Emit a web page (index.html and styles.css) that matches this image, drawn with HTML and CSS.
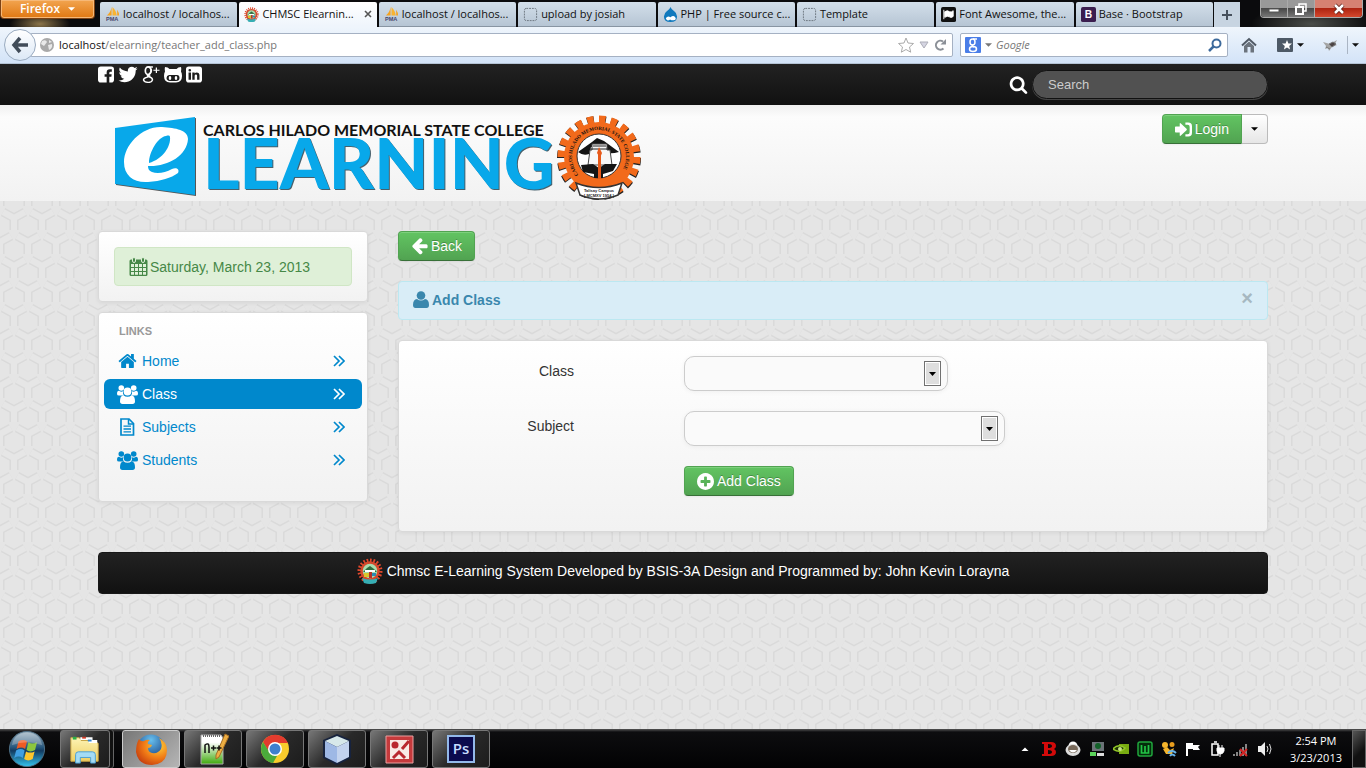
FILE: index.html
```html
<!DOCTYPE html>
<html lang="en">
<head>
<meta charset="utf-8">
<title>CHMSC Elearning System</title>
<link rel="stylesheet" href="styles.css">
</head>
<body>
<svg class="sprite" aria-hidden="true">
  <defs>
    <linearGradient id="orb" x1="0" y1="0" x2="0" y2="1"><stop offset="0" stop-color="#9fb4c2"/><stop offset=".45" stop-color="#27577d"/><stop offset=".55" stop-color="#123a60"/><stop offset="1" stop-color="#35c4ee"/></linearGradient>
    <linearGradient id="folder" x1="0" y1="0" x2="0" y2="1"><stop offset="0" stop-color="#fdf3b4"/><stop offset="1" stop-color="#efcf62"/></linearGradient>
    <linearGradient id="npp" x1="0" y1="0" x2="0" y2="1"><stop offset=".25" stop-color="#fff"/><stop offset="1" stop-color="#3faa0c"/></linearGradient>
    <radialGradient id="fox" cx=".7" cy=".3" r=".9"><stop offset="0" stop-color="#ffd23a"/><stop offset=".5" stop-color="#f07a16"/><stop offset="1" stop-color="#b92c0c"/></radialGradient>
    <radialGradient id="world" cx=".5" cy=".2" r=".8"><stop offset="0" stop-color="#68c0ee"/><stop offset="1" stop-color="#0b2f77"/></radialGradient>
  </defs>
  <symbol id="i-search" viewBox="0 0 1792 1792"><path d="M1216 832q0-185-131.500-316.500t-316.500-131.500-316.500 131.500-131.500 316.500 131.500 316.500 316.500 131.500 316.500-131.500 131.500-316.500zm512 832q0 52-38 90t-90 38q-54 0-90-38l-343-342q-179 124-399 124-143 0-273.500-55.500t-225-150-150-225-55.500-273.500 55.500-273.500 150-225 225-150 273.500-55.500 273.500 55.500 225 150 150 225 55.500 273.500q0 220-124 399l343 343q37 37 37 90z"/></symbol>
  <symbol id="i-plus" viewBox="128 128 1536 1536"><path d="M1344 960v-128q0-26-19-45t-45-19h-256v-256q0-26-19-45t-45-19h-128q-26 0-45 19t-19 45v256h-256q-26 0-45 19t-19 45v128q0 26 19 45t45 19h256v256q0 26 19 45t45 19h128q26 0 45-19t19-45v-256h256q26 0 45-19t19-45zm320-64q0 209-103 385.500t-279.500 279.500-385.500 103-385.500-103-279.500-279.500-103-385.500 103-385.500 279.500-279.500 385.500-103 385.500 103 279.500 279.500 103 385.500z"/></symbol>
  <symbol id="i-left" viewBox="64 160 1640 1640"><path d="M1664 896v128q0 53-32.500 90.500t-84.500 37.500h-704l293 294q38 36 38 90t-38 90l-75 76q-37 37-90 37-52 0-91-37l-651-652q-37-37-37-90 0-52 37-91l651-650q38-38 91-38 52 0 90 38l75 74q38 38 38 91t-38 91l-293 293h704q52 0 84.500 37.500t32.500 90.500z"/></symbol>
  <symbol id="i-home" viewBox="80 80 1632 1632"><path d="M1472 992v480q0 26-19 45t-45 19h-384v-384h-256v384h-384q-26 0-45-19t-19-45v-480q0-1 .5-3t.5-3l575-474 575 474q1 2 1 6zm223-69l-62 74q-8 9-21 11h-3q-13 0-21-7l-692-577-692 577q-12 8-24 7-13-2-21-11l-62-74q-8-10-7-23.500t11-21.500l719-599q32-26 76-26t76 26l244 204v-195q0-14 9-23t23-9h192q14 0 23 9t9 23v408l219 182q10 8 11 21.500t-7 23.500z"/></symbol>
  <symbol id="i-twitter" viewBox="80 200 1620 1400"><path d="M1684 408q-67 98-162 167 1 14 1 42 0 130-38 259.500t-115.500 248.500-184.500 210.500-258 146-323 54.500q-271 0-496-145 35 4 78 4 225 0 401-138-105-2-188-64.500t-114-159.500q33 5 61 5 43 0 85-11-112-23-185.500-111.500t-73.500-205.500v-4q68 38 146 41-66-44-105-115t-39-154q0-88 44-163 121 149 294.500 238.500t371.500 99.500q-8-38-8-74 0-134 94.500-228.500t228.500-94.500q140 0 236 102 109-21 205-78-37 115-142 178 93-10 186-50z"/></symbol>
  <symbol id="i-facebook" viewBox="0 0 17 17"><path fill-rule="evenodd" d="M3 0h11q3 0 3 3v11q0 3-3 3h-2v-6h2.200l.3-2.700H12V6.800q0-1.300 1.300-1.300h1.400V3h-2.200Q9.200 3 9.200 6.400v1.900H7V11h2.200v6H3q-3 0-3-3V3q0-3 3-3z"/></symbol>
  <symbol id="i-gplus" viewBox="0 0 18 18"><g fill="none" stroke="currentColor"><ellipse cx="6" cy="5" rx="3" ry="4" stroke-width="1.800"/><path stroke-width="1.500" d="M6 1h5M8 2q3 3 0 5.500T8.500 11M6 9q-2 1.500 1 2.500 4 1 3.500 3.500T6 17.300 1.200 15 6 11.500"/><path stroke-width="1.300" d="M11.500 4.500H18M14.700 1.500v6"/></g></symbol>
  <symbol id="i-github" viewBox="0 0 18 17"><path fill-rule="evenodd" d="M1 1q3 0 4.500 2h7Q14 1 17 1q.6 2 0 4.500Q18 7 18 10q0 6-6 6.500H6Q0 16 0 10q0-3 1-4.500Q.4 3 1 1zM5 9q-2.500.3-2.500 3T6 15h6q3.500 0 3.500-3T13 9H5z"/><ellipse cx="6" cy="12" rx="1.300" ry="2"/><ellipse cx="12" cy="12" rx="1.300" ry="2"/></symbol>
  <symbol id="i-linkedin" viewBox="0 0 17 17"><path fill-rule="evenodd" d="M3 0h11q3 0 3 3v11q0 3-3 3H3q-3 0-3-3V3q0-3 3-3zM2.700 6.500v7.600h2.600V6.500zM4 2.600a1.400 1.400 0 1 0 .01 2.800A1.400 1.400 0 1 0 4 2.600zM6.700 6.500v7.600h2.500V9.800q0-1.400 1.300-1.400t1.300 1.500v4.200h2.500V9.600q0-3.300-2.900-3.300-1.500 0-2.200 1.200V6.500z"/></symbol>
  <symbol id="i-login" viewBox="0 0 18 17"><path d="M0 6q0-.8.800-.8H5V2.500q0-1.300 1.200-.4l6 5.600q.8.800 0 1.600l-6 5.600q-1.200.9-1.200-.4v-2.700H.8q-.8 0-.8-.8z"/><path d="M11 1h3q4 0 4 4v7q0 4-4 4h-3v-2.500h2.500q2 0 2-2V5.500q0-2-2-2H11z"/></symbol>
  <symbol id="i-calendar" viewBox="0 0 19 19"><path fill-rule="evenodd" d="M2 2.500h15q1.500 0 1.500 1.500v13.500Q18.500 19 17 19H2q-1.500 0-1.500-1.500V4Q.5 2.500 2 2.500zM2 7v3h3V7zm4 0v3h3V7zm4 0v3h3V7zm4 0v3h3V7zM2 11v3h3v-3zm4 0v3h3v-3zm4 0v3h3v-3zm4 0v3h3v-3zM2 15v2.700h3V15zm4 0v2.700h3V15zm4 0v2.700h3V15zm4 0v2.700h3V15z"/><rect x="3.500" y=".5" width="3" height="5" rx="1.500" stroke="#dff0d8"/><rect x="12.500" y=".5" width="3" height="5" rx="1.500" stroke="#dff0d8"/></symbol>
  <symbol id="i-users" viewBox="0 0 21 19"><circle cx="4.300" cy="3" r="2.800"/><circle cx="16.700" cy="3" r="2.800"/><path d="M0 9q0-3.200 2-3.200 2.300 1.400 4 .5-.6 3 1.200 4.200H2Q0 10.500 0 9zM21 9q0-3.200-2-3.200-2.300 1.400-4 .5.600 3-1.200 4.200H19q2 0 2-1.500z"/><circle cx="10.500" cy="6.500" r="3.900"/><path d="M6.300 10.300q4.200 3 8.400 0 3.300.7 3.300 6 0 2.700-2.500 2.700h-10Q3 19 3 16.300q0-5.300 3.300-6z"/></symbol>
  <symbol id="i-file" viewBox="0 0 16 18"><path d="M1.500 1h8L14 5.500V17H1.500z" fill="none" stroke="currentColor" stroke-width="1.700"/><path d="M9 1v5h5" fill="none" stroke="currentColor" stroke-width="1.500"/><path d="M4 8.200h7.500M4 11h7.500M4 13.800h7.500" stroke="currentColor" stroke-width="1.300"/></symbol>
  <symbol id="i-chev" viewBox="0 0 12 12"><path d="M1 1l5 5-5 5M6 1l5 5-5 5" fill="none" stroke="currentColor" stroke-width="1.700"/></symbol>
  <symbol id="i-user" viewBox="0 0 16 17"><circle cx="8" cy="4.500" r="4.300"/><path d="M4 8q4 3 8 0 4 .5 4 6 0 3-2.500 3h-11Q0 17 0 14 0 8.500 4 8z"/></symbol>
  <symbol id="i-caret" viewBox="0 0 8 4"><path d="M0 0h8L4 4z"/></symbol>
  <symbol id="i-pma" viewBox="0 0 16 16"><path d="M7 0v9H2Q6 6 7 0z" fill="#f6a21e"/><path d="M8 0q4 4 4.500 9H8z" fill="#f8b331"/><path d="M13 3q2 3 2 6h-2z" fill="#f6a21e"/><text x="1" y="15" font-size="6" font-weight="700" fill="#45456d" font-family="Liberation Sans, sans-serif">PMA</text></symbol>
  <symbol id="i-emblem" viewBox="0 0 26 26"><circle cx="13" cy="13" r="10.500" fill="none" stroke="#e0472c" stroke-width="4" pathLength="40" stroke-dasharray="1 1"/><circle cx="13" cy="13" r="8.500" fill="#a7dcae" stroke="#d4492c" stroke-width="2.500"/><path d="M6 14l4-4 3-2 4 3 3 3z" fill="#2d6c3e"/><path d="M8 12h10v2H8z" fill="#fff"/><path d="M7 15h5v4H7z" fill="#d9c62b"/><path d="M12 14h3v6h-3z" fill="#b5342a"/><path d="M15 15h4v3h-4z" fill="#2c8bb5"/><path d="M5 20q8 3 16 0l-2 5q-6 2-12 0z" fill="#36aeb4"/></symbol>
  <symbol id="i-dash" viewBox="0 0 16 16"><rect x="1.500" y="1.500" width="13" height="13" rx="2" fill="none" stroke="#6b747e" stroke-dasharray="2 1"/></symbol>
</svg>

<header class="browser">
  <div class="titlebar">
    <button class="firefox" type="button">Firefox <svg class="caret"><use href="#i-caret"/></svg></button>
    <div class="tabs">
      <a class="tab" href="#"><svg><use href="#i-pma"/></svg><span>localhost / localhos...</span></a>
      <a class="tab current" href="#"><svg><use href="#i-emblem"/></svg><span>CHMSC Elearnin...</span><svg class="close" viewBox="0 0 8 8"><path d="M1 1l6 6M7 1L1 7" stroke="#555" stroke-width="1.600"/></svg></a>
      <a class="tab" href="#"><svg><use href="#i-pma"/></svg><span>localhost / localhos...</span></a>
      <a class="tab" href="#"><svg><use href="#i-dash"/></svg><span>upload by josiah</span></a>
      <a class="tab" href="#"><svg viewBox="0 0 16 16"><path d="M8 0q1 3 4 4.500 3 2 3 5.500 0 6-7 6t-7-6q0-3.500 3-5.500Q7 3 8 0z" fill="#1079bd"/><path d="M3 12q2-3 5-1 3-3 5 0t-2 3-3-1q-4 3-5-1z" fill="#fff"/></svg><span>PHP | Free source c...</span></a>
      <a class="tab" href="#"><svg><use href="#i-dash"/></svg><span>Template</span></a>
      <a class="tab" href="#"><svg viewBox="0 0 16 16"><rect width="16" height="16" rx="2"/><path d="M3 3v10M4 5q3-2 5 0 2 1 4-1v6q-2 2-4 .5Q7 9 4 11z" fill="#fff" stroke="#fff"/></svg><span>Font Awesome, the...</span></a>
      <a class="tab" href="#"><svg viewBox="0 0 16 16"><rect width="16" height="16" rx="2" fill="#3b1e4f"/><text x="4" y="12" font-size="11" font-weight="700" fill="#fff" font-family="Liberation Sans, sans-serif">B</text></svg><span>Base · Bootstrap</span></a>
    </div>
    <button class="newtab" type="button" aria-label="New tab"><svg viewBox="0 0 10 10"><path d="M5 0v10M0 5h10" stroke="#46505c" stroke-width="2"/></svg></button>
    <div class="winbtns">
      <button type="button" aria-label="Minimize"><svg viewBox="0 0 14 14"><path d="M2 7h10v3H2z" fill="#fff" stroke="#555"/></svg></button>
      <button type="button" aria-label="Restore"><svg viewBox="0 0 14 14"><path d="M5 2h7v7H5z" fill="none" stroke="#fff" stroke-width="1.500"/><path d="M2 5h7v7H2z" fill="#666" stroke="#fff" stroke-width="2"/></svg></button>
      <button class="quit" type="button" aria-label="Close"><svg viewBox="0 0 14 14"><path d="M3 3l8 8M11 3l-8 8" stroke="#5b1a12" stroke-width="4"/><path d="M3 3l8 8M11 3l-8 8" stroke="#fff" stroke-width="2.500"/></svg></button>
    </div>
  </div>
  <div class="toolbar">
    <button class="goback" type="button" aria-label="Back"><svg viewBox="0 0 18 18"><path d="M9 2L3 9l6 7M3 9h14" fill="none" stroke="#414c59" stroke-width="3.500"/></svg></button>
    <div class="address">
      <svg class="s14" viewBox="0 0 14 14"><circle cx="7" cy="7" r="7" fill="#a9a9a9"/><path d="M2 3q4-2 5 1L4 8 1 6zM8 7l4-1q1 4-3 6zM9 2l3 2-3 1z" fill="#e9e9e9"/></svg>
      <span class="url"><b>localhost</b>/elearning/teacher_add_class.php</span>
      <svg class="s16" viewBox="0 0 16 16"><path d="M8 1l2 5 5.500.5-4 3.500 1.200 5.200L8 12.500l-4.700 2.700L4.500 10l-4-3.500L6 6z" fill="#fff" stroke="#aaa"/></svg>
      <svg class="s10" viewBox="0 0 10 8"><path d="M1 1h8L5 7z" fill="#d5d5e2" stroke="#adaeb8"/></svg>
      <svg class="s12" viewBox="0 0 12 12"><path d="M9.500 9.500A4.500 4.500 0 1 1 9 2.500" fill="none" stroke="#8b9097" stroke-width="2"/><path d="M12 0v5.500H6.500z" fill="#8b9097"/></svg>
    </div>
    <div class="engine">
      <svg class="s16" viewBox="0 0 16 16"><rect width="16" height="16" rx="1" fill="#4a7ee8"/><g fill="none" stroke="#fff" stroke-width="1.500"><ellipse cx="7.500" cy="5" rx="2.500" ry="3"/><ellipse cx="8" cy="12" rx="3.500" ry="2.500"/><path d="M8 2h4M8 8q-2 1 1 2"/></g></svg>
      <svg class="caret dim"><use href="#i-caret"/></svg>
      <input type="text" placeholder="Google" aria-label="Google search">
      <svg class="s14" viewBox="0 0 14 14"><circle cx="8.500" cy="5.500" r="4" fill="none" stroke="#3d6a9c" stroke-width="2"/><path d="M6 8l-5 5" stroke="#3d6a9c" stroke-width="2.500"/></svg>
    </div>
    <div class="extras">
      <svg class="s16" viewBox="0 0 16 16"><path d="M1 8.500L8 2l7 6.500" fill="none" stroke="#505965" stroke-width="2"/><path d="M3 9l5-4.500L13 9v6.500H9.500V10h-3v5.500H3z" fill="#6b737d"/></svg>
      <span class="pair"><svg class="s16" viewBox="0 0 16 14"><rect width="16" height="14" rx="1" fill="#4d5966"/><path d="M10 2l1.400 3.400 3.600.2-2.800 2.300.9 3.600-3.100-2-3.100 2 .9-3.600L5 5.600l3.600-.2z" fill="#fff"/></svg><svg class="caret"><use href="#i-caret"/></svg></span>
      <svg class="s16" viewBox="0 0 16 12"><path d="M0 3l7 2 7-4-2 4 2 1-5 2-3 4-1-3-3 1 1-3z" fill="#a4a4a4"/><path d="M6 5l4-2 3 2-4 3zM3 8l4 2" fill="#4c4444" stroke="#777"/></svg>
      <span class="end"><svg class="caret"><use href="#i-caret"/></svg></span>
    </div>
  </div>
</header>

<div class="page">
  <nav class="topnav">
    <div class="container topnav-in">
      <div class="social">
        <a href="#" aria-label="Facebook"><svg><use href="#i-facebook"/></svg></a>
        <a href="#" aria-label="Twitter"><svg class="bird"><use href="#i-twitter"/></svg></a>
        <a href="#" aria-label="Google Plus"><svg class="wide"><use href="#i-gplus"/></svg></a>
        <a href="#" aria-label="GitHub"><svg class="wide"><use href="#i-github"/></svg></a>
        <a href="#" aria-label="LinkedIn"><svg><use href="#i-linkedin"/></svg></a>
      </div>
      <form class="sitesearch"><label for="q" aria-label="Search"><svg><use href="#i-search"/></svg></label><input id="q" type="text" placeholder="Search"></form>
    </div>
  </nav>

  <div class="banner">
    <div class="container banner-in">
      <div class="logo">
        <svg class="book" viewBox="0 0 82 80"><path d="M1 13L81 2v78L1 69z" fill="#555"/><path d="M0 12L80 1v78L0 68z" fill="#08a8ea"/><path fill-rule="evenodd" fill="#fff" d="M47 11C27 10 9 29 9 46c0 14 10 21 24 20 13-1 23-4 30-9 2-4-2-6-6-4-7 4-15 5-20 3-3-1-4-3-4-6C52 51 72 40 73 23 73 14 61 12 47 11zM55 21c1 9-7 22-21 26 0-11 9-26 17-27 3-1 4 0 4 1z"/></svg>
        <div class="words"><span class="college">CARLOS HILADO MEMORIAL STATE COLLEGE</span><span class="learning">LEARNING</span></div>
        <svg class="seal" viewBox="0 0 84 86">
          <defs><path id="ring" d="M21.500 59.600A27 27 0 1 1 62.500 59.600"/></defs>
          <circle cx="42" cy="43" r="37" fill="none" stroke="#222" stroke-width="10" pathLength="40" stroke-dasharray="1.150 .85"/>
          <circle cx="42" cy="42" r="37" fill="none" stroke="#f26a1b" stroke-width="9" pathLength="40" stroke-dasharray="1.100 .9"/>
          <circle cx="42" cy="42" r="35" fill="#f26a1b"/><circle cx="42" cy="41" r="22" fill="#fff" stroke="#333"/>
          <path d="M21 37l14-10 5-4 7 3 15 11q-7 2-11 1l-1-6H34l-2 7q-6 2-11-2z" fill="#151515"/>
          <path d="M35 29h15v6h3l2 15H31l2-15h2z" fill="#f7f7f7" stroke="#444"/><path d="M33 34h19M36 31h13" stroke="#222"/>
          <path d="M24 50l12-1 6 4 6-4h12l-4 7-10 3v4h-9v-4l-11-2z" fill="#151515"/><path d="M41 38h3v26h-3z" fill="#e75a1a"/><path d="M42 32l3 6-2 5-3-5z" fill="#e75a1a"/>
          <text class="sealtext"><textPath href="#ring">CARLOS HILADO MEMORIAL STATE COLLEGE</textPath></text>
          <path d="M19 68l4 12q19 8 38 0l4-12q-23 9-46 0z" fill="#fff" stroke="#333" stroke-width="1.500"/>
          <text class="ribbon" x="42" y="77">Talisay Campus</text><text class="ribbon" x="42" y="82">[ MCMXV 1954 ]</text>
        </svg>
      </div>
      <div class="login"><button class="btn" type="button"><svg><use href="#i-login"/></svg>Login</button><button class="drop" type="button" aria-label="More"><svg class="caret"><use href="#i-caret"/></svg></button></div>
    </div>
  </div>

  <main class="container columns">
    <aside class="side">
      <div class="card datecard"><div class="date"><svg><use href="#i-calendar"/></svg>Saturday, March 23, 2013</div></div>
      <nav class="card links">
        <h2>Links</h2>
        <a href="#"><svg class="ico small"><use href="#i-home"/></svg><span>Home</span><svg class="chev"><use href="#i-chev"/></svg></a>
        <a class="active" href="#"><svg class="ico"><use href="#i-users"/></svg><span>Class</span><svg class="chev"><use href="#i-chev"/></svg></a>
        <a href="#"><svg class="ico small"><use href="#i-file"/></svg><span>Subjects</span><svg class="chev"><use href="#i-chev"/></svg></a>
        <a href="#"><svg class="ico"><use href="#i-users"/></svg><span>Students</span><svg class="chev"><use href="#i-chev"/></svg></a>
      </nav>
    </aside>
    <section class="content">
      <button class="btn" type="button"><svg><use href="#i-left"/></svg>Back</button>
      <div class="info"><svg><use href="#i-user"/></svg><strong>Add Class</strong><button type="button" aria-label="Close">×</button></div>
      <form class="card form">
        <label for="class">Class</label><select id="class" class="w-class"><option></option></select>
        <label for="subject">Subject</label><select id="subject" class="w-subject"><option></option></select>
        <button class="btn submit" type="button"><svg><use href="#i-plus"/></svg>Add Class</button>
      </form>
    </section>
  </main>
  <div class="container"><footer class="foot"><svg><use href="#i-emblem"/></svg>Chmsc E-Learning System Developed by BSIS-3A Design and Programmed by: John Kevin Lorayna</footer></div>
</div>

<div class="taskbar">
  <button class="start" type="button" aria-label="Start"><svg viewBox="0 0 40 40"><circle cx="20" cy="20" r="18.500" fill="url(#orb)" stroke="#4e7086"/><path d="M11 12q5-3 9 0l-2 8q-4-3-9 0z" fill="#ee5b24"/><path d="M21.500 13q4 2.500 9 0l-2 8q-5 3-9 0z" fill="#8cc63e"/><path d="M8.500 21.500q5-3 9 0l-2 8q-4-3-9 0z" fill="#3f9fe2"/><path d="M19 22.500q4 2.500 9 0l-2 8q-5 3-9 0z" fill="#fdc62c"/><path d="M4 16q3-13 16-13t16 13q-16-6-32 0z" fill="#fff" opacity=".25"/></svg></button>
  <button class="app stack" type="button" aria-label="Explorer"><svg viewBox="0 0 34 32"><path d="M2 4h9l2 3h13l5 3v19H2z" fill="url(#folder)" stroke="#cda945"/><path d="M4 3h4v3H4z" fill="#2eae46"/><path d="M12 5h13M21 8h9" stroke="#fff" stroke-width="3"/><path d="M14 3h4v2h-4z" fill="#d13d2a"/><path d="M20 6h4v2h-4z" fill="#3183cd"/><path d="M7 31v-9q0-3 3-3h15q3 0 3 3v9h-5v-6H12v6z" fill="#a4dcf5" stroke="#4a9ed0"/></svg></button>
  <button class="app lit" type="button" aria-label="Firefox"><svg viewBox="0 0 32 32"><circle cx="16" cy="15.500" r="14" fill="url(#world)"/><path d="M4 6q2 3 5 2 3-2 6-1-3 2-2 4l4 1q-1 3-4 3 0 4 4 5 6 1 9-4 2-6-2-11 8 4 8 12 0 14-15 15Q3 32 1 19 1 11 4 6z" fill="url(#fox)"/></svg></button>
  <button class="app" type="button" aria-label="Notepad++"><svg viewBox="0 0 32 32"><path d="M4 2h20l2 3v26H4z" fill="url(#npp)" stroke="#aaa"/><path d="M6 3h18" stroke="#666" stroke-width="2" stroke-dasharray="1 1"/><path d="M28 1l4 2-10 21-3 2v-4z" fill="#edae42" stroke="#a56d25"/><path d="M8 20v-8q4-3 4 2v6M14 15h5M16.500 12.500v5M19.500 15h5M22 12.500v5" stroke="#111" stroke-width="1.500" fill="none"/></svg></button>
  <button class="app" type="button" aria-label="Chrome"><svg viewBox="0 0 32 32"><circle cx="16" cy="16" r="14" fill="#f9cc2c"/><path d="M4 9A14 14 0 0 1 29 10H16l-6 9z" fill="#e33b2e"/><path d="M4 9l7 11 7 3-4 7A14 14 0 0 1 4 9z" fill="#4bab3b"/><circle cx="16" cy="16" r="7" fill="#fff"/><circle cx="16" cy="16" r="5.500" fill="#3f80cf"/></svg></button>
  <button class="app" type="button" aria-label="NetBeans"><svg viewBox="0 0 32 32"><path d="M16 1l14 6v18l-14 7-14-7V7z" fill="#17233e"/><path d="M16 3l12 5-12 6L4 8z" fill="#d7e8ea"/><path d="M4 8l12 6v16L4 24z" fill="#9eb8e5"/><path d="M28 8l-12 6v16l12-6z" fill="#c3d3ee"/></svg></button>
  <button class="app" type="button" aria-label="Picture Manager"><svg viewBox="0 0 32 32"><path d="M3 3h27v27H3z" fill="#c53a3c" stroke="#e9a0a0"/><path d="M7 7h19v19H7z" fill="#f8e9e5"/><circle cx="12" cy="12" r="3.500" fill="#b9282f"/><path d="M10 25l6-6 6 6M19 16l7-8" stroke="#b9282f" stroke-width="3" fill="none"/></svg></button>
  <button class="app" type="button" aria-label="Photoshop"><svg viewBox="0 0 32 32"><path d="M3 3h26v26H3z" fill="#0b0b4e" stroke="#93b9ea" stroke-width="2"/><text x="16" y="21" text-anchor="middle" font-size="15" font-weight="600" fill="#c6dcff" font-family="Open Sans, sans-serif">Ps</text></svg></button>
  <div class="tray">
    <svg viewBox="0 0 16 16"><path d="M4.500 10L8 6.500l3.500 3.500z" fill="#fff"/></svg>
    <svg viewBox="0 0 16 16"><path fill-rule="evenodd" d="M1 1h9q5 0 5 4 0 2-2 3 2 1 2 3 0 4-5 4H1v-2h2V3H1zm6 2v4q4 0 4-2t-4-2zm0 6v4q4 0 4-2t-4-2z" fill="#d20a0a"/></svg>
    <svg viewBox="0 0 16 16"><circle cx="8" cy="5" r="4.500" fill="#fff"/><ellipse cx="8" cy="9" rx="7.500" ry="6" fill="#ddd"/><ellipse cx="8" cy="8" rx="5" ry="4" fill="#776859"/><path d="M4 9q4 5 8 0z" fill="#fff"/></svg>
    <svg viewBox="0 0 16 16"><rect x="3" y="1" width="12" height="9" fill="#6b7378"/><circle cx="9" cy="5" r="3" fill="#126129"/><path d="M1 11h6v4H1z" fill="#5cd35b"/><path d="M8 12h7v3H8z" fill="#ddd"/></svg>
    <svg viewBox="0 0 16 16"><path d="M6 3h10v10H6z" fill="#79ab12"/><path d="M0 8q5-6 12-1-5 6-12 1z" fill="#1d3303" stroke="#93c828" stroke-width="1.500"/><circle cx="7" cy="8" r="2" fill="#cbe58b"/></svg>
    <svg viewBox="0 0 16 16"><rect x="1" y="1" width="14" height="14" rx="2" fill="#042c0b" stroke="#20a63d" stroke-width="1.500"/><path d="M4.500 4v8H8V5v7h3.500V4" fill="none" stroke="#22c546" stroke-width="1.700"/></svg>
    <svg viewBox="0 0 16 16"><circle cx="4" cy="4" r="3" fill="#f5b52c"/><circle cx="11" cy="3.500" r="2.500" fill="#e89d1e"/><path d="M2 8l4-2 3 3 4-2-2 6H5z" fill="#f5b52c"/><path d="M7 12q4-4 8 0M9 15q2-3 5 0" fill="none" stroke="#68b4ea" stroke-width="2"/></svg>
    <svg viewBox="0 0 16 16"><path d="M2 2v13" stroke="#fff" stroke-width="2"/><path d="M3 2h5v2h7l-2 2 2 3H8V8H3z" fill="#fff"/></svg>
    <svg viewBox="0 0 16 16"><path d="M3 3h6v11H3zM5 1h3" fill="none" stroke="#fff" stroke-width="1.500"/><path d="M8 7h7v3q-1 3-3.500 3T8 10zM10 4v3M13 4v3M11 13v3" fill="#fff" stroke="#fff"/></svg>
    <svg viewBox="0 0 16 16"><path d="M1 15v-2M4 15v-4M7 15V9M10 15V6M13 15V3" stroke="#858585" stroke-width="2"/><path d="M7 8l7 7M14 8l-7 7" stroke="#d22424" stroke-width="2"/></svg>
    <svg viewBox="0 0 16 16"><path d="M1 5h3l4-4v14l-4-4H1z" fill="#eee"/><path d="M10 5q2 3 0 6M12.500 3q3 5 0 10" fill="none" stroke="#ddd"/></svg>
  </div>
  <div class="clock"><span>2:54 PM</span><span>3/23/2013</span></div>
  <button class="peek" type="button" aria-label="Show desktop"></button>
</div>
</body>
</html>
```

FILE: styles.css
```css
* { box-sizing: border-box; }
body {
  margin: 0;
  min-height: 100vh;
  display: flex;
  flex-direction: column;
  font: 14px/20px "Liberation Sans", Arial, sans-serif;
  color: #333;
}
button, input, select { font: inherit; margin: 0; padding: 0; border: 0; background: none; color: inherit; }
a { text-decoration: none; color: inherit; }
svg { flex: none; fill: currentColor; display: block; }
.sprite { position: absolute; width: 0; height: 0; }
.caret { width: 7px; height: 4px; }
.s16 { width: 16px; height: 16px; }
.s14 { width: 14px; height: 14px; }
.s12 { width: 12px; height: 12px; }
.s10 { width: 10px; height: 10px; }

/* browser window */
.browser { font: 11px/16px "Open Sans", "Noto Sans", sans-serif; color: #111; }
.titlebar {
  display: flex;
  align-items: flex-start;
  height: 27px;
  background:
    radial-gradient(ellipse 30px 12px at 40px 24px, #8b7448, transparent),
    radial-gradient(ellipse 60px 20px at 96% 24px, #4a4d49, transparent),
    #0b0b0d;
}
.firefox {
  width: 95px;
  height: 19px;
  margin-right: 5px;
  display: flex;
  align-items: center;
  justify-content: center;
  gap: 8px;
  border: 1px solid #7c4214;
  border-top: 0;
  border-radius: 0 0 4px 4px;
  background: linear-gradient(#f2a550, #e07812);
  box-shadow: inset 0 0 0 1px #f6b877;
  color: #fff;
  font-weight: 600;
  font-size: 12px;
}
.tabs { flex: 0 1 1113px; min-width: 0; display: flex; gap: 2px; padding-top: 2px; }
.tab {
  flex: 1 1 0;
  min-width: 0;
  height: 25px;
  padding: 0 5px;
  display: flex;
  align-items: center;
  gap: 3px;
  background: linear-gradient(#d3dfea, #b6c5d4);
  border-bottom: 1px solid #8895a3;
  border-radius: 2px 2px 0 0;
  white-space: nowrap;
}
.tab svg { width: 15px; height: 15px; }
.tab span { flex: 1; }
.tab .close { width: 8px; height: 8px; }
.tab.current { background: linear-gradient(#fff, #eff5fc); border-bottom-color: #eff5fc; }
.newtab { width: 26px; height: 25px; margin: 2px 0 0 1px; display: grid; place-items: center; background: #c7d4e1; }
.newtab svg { width: 10px; height: 10px; }
.winbtns { display: flex; margin-left: auto; margin-right: 3px; border: 1px solid #aaa; border-top: 0; border-radius: 0 0 4px 4px; overflow: hidden; }
.winbtns button { width: 27px; height: 17px; display: grid; place-items: center; background: linear-gradient(#999 45%, #484848 50%, #777); border-right: 1px solid #aaa; }
.winbtns svg { width: 14px; height: 14px; }
.winbtns .quit { width: 47px; border: 0; background: linear-gradient(#d68172 45%, #ae2411 50%, #d3482e); }
.toolbar {
  height: 37px;
  display: flex;
  align-items: center;
  background: linear-gradient(#eff5fc, #d3e3f8);
  border-bottom: 1px solid #b4c3d5;
}
.goback {
  z-index: 1;
  width: 32px;
  height: 32px;
  margin: 0 -6px 0 4px;
  display: grid;
  place-items: center;
  border: 1px solid #9aabc0;
  border-radius: 50%;
  background: linear-gradient(#fff, #dce8f6);
}
.goback svg { width: 18px; height: 18px; }
.address, .engine { height: 24px; display: flex; align-items: center; background: #fff; border: 1px solid #a5b1c3; border-radius: 2px; }
.address { flex: 1; min-width: 0; padding: 0 6px 0 9px; gap: 5px; }
.url { flex: 1; color: #777; }
.url b { font-weight: 400; color: #111; }
.engine { width: 268px; margin-left: 7px; padding: 0 5px 0 4px; gap: 4px; }
.engine input { flex: 1; min-width: 0; font-style: italic; }
.engine input::placeholder { color: #777; }
.dim { color: #777; }
.extras { width: 138px; display: flex; align-items: center; justify-content: space-between; padding: 0 7px 0 13px; }
.pair { display: flex; align-items: center; gap: 4px; }
.end { height: 18px; display: flex; align-items: center; padding-left: 4px; margin-left: -12px; border-left: 1px solid #aab5c4; }

/* site */
.page {
  flex: 1;
  background-color: #e5e5e5;
  background-image: url("data:image/svg+xml,%3Csvg xmlns='http://www.w3.org/2000/svg' width='28' height='48'%3E%3Cg fill='none' stroke='%23dadada' stroke-width='9'%3E%3Cpath id='a' d='M14 10L3 4M14 10l11-6M14 10v12M0 34l-11-6M0 34l11-6M0 34v12M28 34l-11-6M28 34l11-6M28 34v12'/%3E%3C/g%3E%3Cg fill='none' stroke='%23e6e6e6' stroke-width='6'%3E%3Cpath d='M14 10L3 4M14 10l11-6M14 10v12M0 34l-11-6M0 34l11-6M0 34v12M28 34l-11-6M28 34l11-6M28 34v12'/%3E%3C/g%3E%3C/svg%3E");
}
.container { width: 100%; max-width: 1170px; margin: 0 auto; }
.topnav { background: linear-gradient(#222, #111); color: #fff; }
.topnav-in { height: 41px; display: flex; justify-content: space-between; }
.social { display: flex; gap: 4px; padding-top: 2px; height: 20px; }
.social svg { width: 16px; height: 17px; }
.social .bird { width: 20px; }
.social .wide { width: 18px; }
.sitesearch { display: flex; align-items: center; gap: 4px; }
.sitesearch svg { width: 19px; height: 19px; }
.sitesearch input {
  width: 236px;
  height: 29px;
  padding: 0 15px;
  font-size: 13px;
  color: #fff;
  background: #515151;
  border: 1px solid #111;
  border-radius: 15px;
  box-shadow: 0 1px 0 #444;
}
.sitesearch input::placeholder { color: #ccc; }
.banner { background: linear-gradient(#f0f0f0, #fcfcfc 12px, #f2f2f2); }
.banner-in { height: 96px; display: flex; justify-content: space-between; align-items: flex-start; }
.logo { display: flex; padding: 10px 0 0 17px; }
.book { width: 82px; height: 82px; }
.words { display: flex; flex-direction: column; width: 350px; margin: 5px 4px 0 6px; font-family: Lato, sans-serif; white-space: nowrap; }
.college { font-size: 16px; line-height: 20px; font-weight: 700; color: #111; }
.learning { font-size: 70px; line-height: 44px; font-weight: 900; color: #08a8ea; text-shadow: 1px 1px 0 #47606c; }
.seal { width: 84px; height: 86px; }
.sealtext { font: 700 5px "Liberation Serif", serif; fill: #111; }
.ribbon { font: 700 4px "Liberation Sans", sans-serif; text-anchor: middle; fill: #222; }
.btn {
  display: inline-flex;
  align-items: center;
  gap: 3px;
  height: 30px;
  padding: 0 12px;
  border: 1px solid #51a351;
  border-bottom-color: #387038;
  border-radius: 4px;
  background: linear-gradient(#62c462, #51a351);
  box-shadow: inset 0 1px 0 #7dd07d, 0 1px 2px #0000000d;
  color: #fff;
  text-shadow: 0 -1px 0 #00000040;
}
.btn svg { width: 17px; height: 17px; }
.login { display: flex; margin-top: 9px; }
.login .btn { border-radius: 4px 0 0 4px; }
.drop { width: 26px; height: 30px; display: grid; place-items: center; color: #000; background: linear-gradient(#fff, #e6e6e6); border: 1px solid #bbb; border-left: 0; border-radius: 0 4px 4px 0; }
.columns { display: flex; gap: 30px; padding-top: 30px; align-items: flex-start; }
.side { flex: 0 0 270px; display: flex; flex-direction: column; gap: 10px; }
.content { flex: 1; min-width: 0; display: flex; flex-direction: column; align-items: stretch; gap: 20px; }
.content > .btn { align-self: flex-start; }
.card { background: linear-gradient(#fff, #f2f2f2); border: 1px solid #d9d9d9; border-radius: 4px; box-shadow: 0 1px 4px #00000011; }
.datecard { padding: 15px; }
.date { display: flex; align-items: center; gap: 2px; height: 39px; padding: 0 14px; color: #468847; background: #dff0d8; border: 1px solid #d0e6c5; border-radius: 4px; }
.date svg { width: 19px; height: 19px; }
.links { padding: 7px 5px 26px; display: flex; flex-direction: column; gap: 3px; }
.links h2 { margin: 0; padding: 0 15px; font-size: 11px; line-height: 23px; text-transform: uppercase; color: #999; }
.links a { height: 30px; display: flex; align-items: center; gap: 4px; padding: 0 17px 0 13px; color: #08c; border-radius: 6px; }
.links a.active { color: #fff; background: #08c; }
.links span { flex: 1; }
.ico { width: 21px; height: 19px; }
.ico.small { height: 18px; }
.chev { width: 12px; height: 12px; }
.info { display: flex; align-items: center; gap: 3px; height: 39px; padding: 0 14px 2px; color: #3a87ad; background: #d9edf7; border: 1px solid #bce8f1; border-radius: 4px; }
.info svg { width: 16px; height: 17px; }
.info button { margin-left: auto; padding-bottom: 4px; font-size: 20px; font-weight: 700; color: #a6b8c1; }
.form { display: grid; grid-template-columns: 175px 1fr; column-gap: 110px; row-gap: 20px; justify-items: start; align-items: start; padding: 15px 15px 35px 0; }
.form label { justify-self: end; padding-top: 5px; }
.form select {
  max-width: 100%;
  height: 35px;
  appearance: none;
  border: 1px solid #ccc;
  border-radius: 10px;
  box-shadow: 0 1px 5px #0000000d;
  background: #fafafa url("data:image/svg+xml,%3Csvg xmlns='http://www.w3.org/2000/svg' width='17' height='25'%3E%3Crect x='.5' y='.5' width='16' height='24' fill='%23fff' stroke='%23707070'/%3E%3Crect x='2' y='2' width='13' height='21' fill='%23dedede'/%3E%3Cpath d='M5 11h7l-3.500 4z'/%3E%3C/svg%3E") no-repeat right 6px center;
}
.form .w-class { width: 264px; }
.form .w-subject { width: 321px; }
.submit { grid-column: 2; }
.foot { display: flex; justify-content: center; align-items: center; gap: 4px; min-height: 42px; margin-top: 20px; padding-bottom: 4px; color: #fff; background: linear-gradient(#222, #111); border: 1px solid #181818; border-radius: 4px; }
.foot svg { width: 26px; height: 26px; }

/* desktop taskbar */
.taskbar { height: 39px; display: flex; align-items: center; gap: 4px; background: linear-gradient(#555, #0d0d0f 3px, #020203); color: #fff; }
.start { width: 40px; height: 38px; margin: 0 12px 0 7px; overflow: hidden; }
.start svg { width: 40px; height: 38px; }
.app { width: 58px; height: 38px; display: grid; place-items: center; border: 1px solid #777; border-radius: 3px; background: linear-gradient(135deg, #777, #292929 50%, #1c1c1c); }
.app svg { width: 32px; height: 32px; }
.app.stack { width: 50px; margin-left: -3px; margin-right: 8px; box-shadow: 3px 0 0 #111, 4px 0 0 #666; }
.app.lit { background: linear-gradient(135deg, #777, #b5b5b5); border-color: #ccc; }
.tray { display: flex; gap: 8px; margin-left: auto; }
.tray svg { width: 16px; height: 16px; }
.clock { display: flex; flex-direction: column; align-items: center; margin: 0 6px 0 13px; font: 11px/17px "Open Sans", sans-serif; }
.peek { width: 14px; height: 38px; border: 1px solid #666; background: linear-gradient(135deg, #555, #111 60%); }
```
